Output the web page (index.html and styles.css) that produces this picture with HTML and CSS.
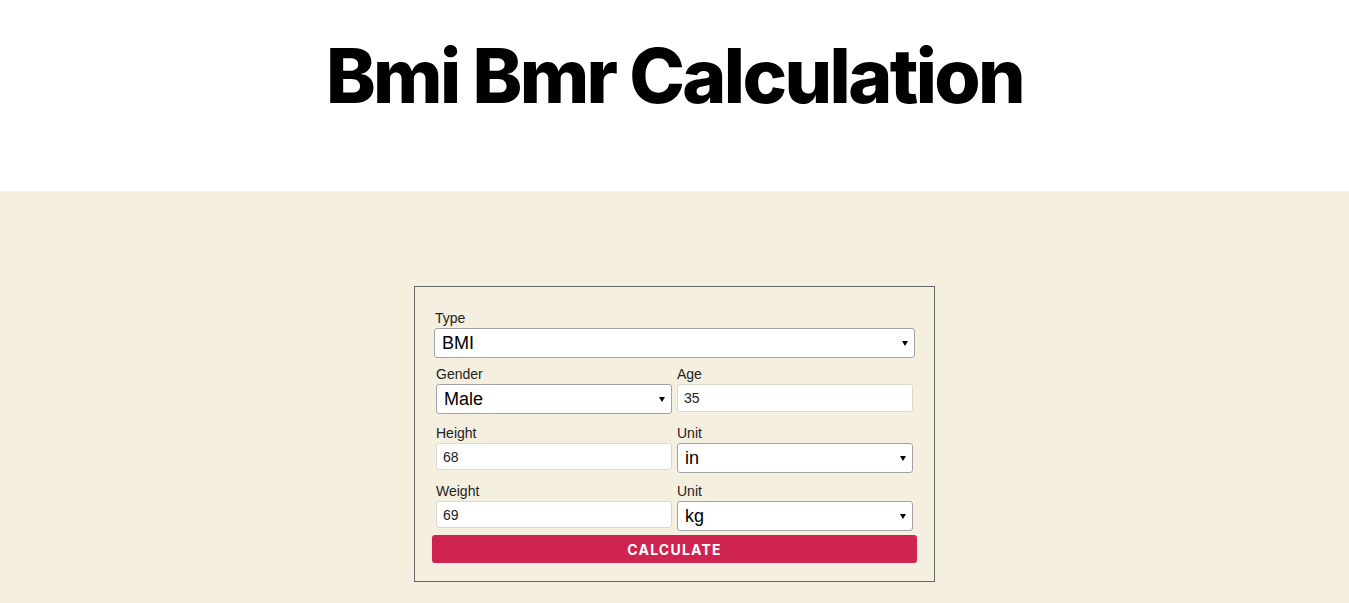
FILE: index.html
```html
<!DOCTYPE html>
<html lang="en">
<head>
<meta charset="utf-8">
<title>Bmi Bmr Calculation</title>
<link rel="stylesheet" href="styles.css">
</head>
<body>
<header class="page-header">
  <h1 class="page-title">Bmi Bmr Calculation</h1>
</header>
<main class="calc-section">
  <form class="calc-box">
    <div class="field field-full">
      <label class="field-label">Type</label>
      <div class="select-wrap">
        <select class="select select-tall">
          <option>BMI</option>
          <option>BMR</option>
        </select>
      </div>
    </div>
    <div class="row row-first">
      <div class="field">
        <label class="field-label">Gender</label>
        <div class="select-wrap">
          <select class="select">
            <option>Male</option>
            <option>Female</option>
          </select>
        </div>
      </div>
      <div class="field">
        <label class="field-label">Age</label>
        <input class="input" type="text" value="35">
      </div>
    </div>
    <div class="row">
      <div class="field">
        <label class="field-label">Height</label>
        <input class="input input-short" type="text" value="68">
      </div>
      <div class="field">
        <label class="field-label">Unit</label>
        <div class="select-wrap">
          <select class="select">
            <option>in</option>
            <option>cm</option>
          </select>
        </div>
      </div>
    </div>
    <div class="row row-last">
      <div class="field">
        <label class="field-label">Weight</label>
        <input class="input input-short" type="text" value="69">
      </div>
      <div class="field">
        <label class="field-label">Unit</label>
        <div class="select-wrap">
          <select class="select">
            <option>kg</option>
            <option>lb</option>
          </select>
        </div>
      </div>
    </div>
    <button class="calc-button" type="button">CALCULATE</button>
  </form>
</main>
</body>
</html>
```

FILE: styles.css
```css
html, body {
  margin: 0;
  padding: 0;
}

body {
  background: #f5efe0;
  font-family: "Liberation Sans", Arial, sans-serif;
  color: #222;
}

.page-header {
  background: #ffffff;
  padding: 31px 0 70px;
  text-align: center;
}

.page-title {
  margin: 0;
  font-family: Inter, "Liberation Sans", sans-serif;
  font-weight: 800;
  font-size: 75px;
  line-height: 90px;
  letter-spacing: -0.035em;
  color: #000;
}

.calc-section {
  background: #f5efe0;
  padding: 95px 0 40px;
  display: flex;
  justify-content: center;
}

.calc-box {
  width: 485px;
  border: 1px solid #666;
  padding: 23px 17px 18px;
  display: flex;
  flex-direction: column;
}

.field {
  display: flex;
  flex-direction: column;
}

.field-full {
  margin: 0 2px 8px;
}

.field-full .field-label {
  padding-left: 1px;
}

.field-label {
  font-size: 14px;
  line-height: 16px;
  color: #222;
  margin-bottom: 2px;
}

.row {
  display: grid;
  grid-template-columns: 1fr 1fr;
  column-gap: 5px;
  padding: 0 4px;
  margin-bottom: 10px;
}

.row-first {
  margin-bottom: 11px;
}

.row-last {
  margin-bottom: 4px;
}

.select-wrap {
  position: relative;
}

.select-wrap::after {
  content: "";
  position: absolute;
  right: 7px;
  top: 50%;
  margin-top: -2px;
  border-left: 3px solid transparent;
  border-right: 3px solid transparent;
  border-top: 5px solid #000;
  pointer-events: none;
}

.select {
  appearance: none;
  -webkit-appearance: none;
  display: block;
  width: 100%;
  box-sizing: border-box;
  height: 30px;
  margin: 0;
  padding: 0 20px 0 7px;
  background: #fff;
  border: 1px solid #a3a3a3;
  border-radius: 3px;
  font-family: "Liberation Sans", Arial, sans-serif;
  font-size: 18px;
  color: #000;
}

.input {
  display: block;
  width: 100%;
  box-sizing: border-box;
  height: 28px;
  margin: 0;
  padding: 0 6px;
  background: #fff;
  border: 1px solid #ddd8cc;
  border-radius: 3px;
  font-family: "Liberation Sans", Arial, sans-serif;
  font-size: 14px;
  color: #222;
}

.input-short {
  height: 27px;
}

.calc-button {
  display: block;
  width: 100%;
  height: 28px;
  margin: 0;
  padding: 0;
  border: none;
  border-radius: 3px;
  background: #cf2450;
  color: #fff;
  font-family: Inter, "Liberation Sans", sans-serif;
  font-weight: 700;
  font-size: 14px;
  letter-spacing: 1.2px;
}
```
